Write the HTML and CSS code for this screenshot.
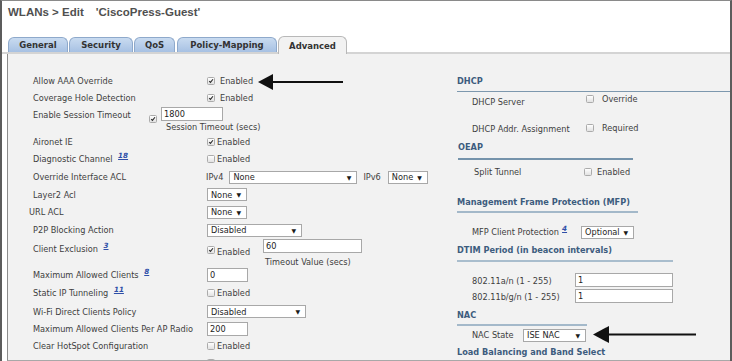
FILE: index.html
```html
<!DOCTYPE html>
<html>
    <head>
        <link rel="stylesheet" href="styles.css">
    </head>
    <body>

        <div class="frame">

            <div class="head">
                <h1 class="title"><span>WLANs &gt; Edit</span><span class="name">'CiscoPress-Guest'</span></h1>
                <ul class="tabs">
                    <li class="tab general">General</li>
                    <li class="tab security">Security</li>
                    <li class="tab qos">QoS</li>
                    <li class="tab policy">Policy-Mapping</li>
                    <li class="tab advanced active">Advanced</li>
                </ul>
            </div>

            <div class="panel">

                <div class="col left">
                    <div class="row r19">
                        <label class="lbl">Allow AAA Override</label>
                        <span class="cb on"><svg viewBox="0 0 8 8"><path d="M1.6 4.1 L3.3 5.9 L6.6 1.7"/></svg></span>
                        <span class="opt">Enabled</span>
                    </div>
                    <div class="row r16">
                        <label class="lbl">Coverage Hole Detection</label>
                        <span class="cb on"><svg viewBox="0 0 8 8"><path d="M1.6 4.1 L3.3 5.9 L6.6 1.7"/></svg></span>
                        <span class="opt">Enabled</span>
                    </div>
                    <div class="row tall session">
                        <label class="lbl short">Enable Session Timeout</label>
                        <span class="cb on"><svg viewBox="0 0 8 8"><path d="M1.6 4.1 L3.3 5.9 L6.6 1.7"/></svg></span>
                        <div class="stack">
                            <input class="txt timeout" value="1800">
                            <span class="hint">Session Timeout (secs)</span>
                        </div>
                    </div>
                    <div class="row r16">
                        <label class="lbl">Aironet IE</label>
                        <span class="cb on"><svg viewBox="0 0 8 8"><path d="M1.6 4.1 L3.3 5.9 L6.6 1.7"/></svg></span>
                        <span class="opt near">Enabled</span>
                    </div>
                    <div class="row">
                        <label class="lbl">Diagnostic Channel <a class="ref">18</a></label>
                        <span class="cb"></span>
                        <span class="opt near">Enabled</span>
                    </div>
                    <div class="row">
                        <label class="lbl">Override Interface ACL</label>
                        <span class="ip">IPv4</span>
                        <span class="sel acl"><span>None</span><i>&#9660;</i></span>
                        <span class="ip v6">IPv6</span>
                        <span class="sel small"><span>None</span><i>&#9660;</i></span>
                    </div>
                    <div class="row r17">
                        <label class="lbl">Layer2 Acl</label>
                        <span class="sel small"><span>None</span><i>&#9660;</i></span>
                    </div>
                    <div class="row">
                        <label class="lbl url">URL ACL</label>
                        <span class="sel small"><span>None</span><i>&#9660;</i></span>
                    </div>
                    <div class="row">
                        <label class="lbl">P2P Blocking Action</label>
                        <span class="sel p2p"><span>Disabled</span><i>&#9660;</i></span>
                    </div>
                    <div class="row tall exclusion">
                        <label class="lbl">Client Exclusion <a class="ref">3</a></label>
                        <span class="cb on"><svg viewBox="0 0 8 8"><path d="M1.6 4.1 L3.3 5.9 L6.6 1.7"/></svg></span>
                        <span class="opt near">Enabled</span>
                        <div class="stack">
                            <input class="txt wide" value="60">
                            <span class="hint">Timeout Value (secs)</span>
                        </div>
                    </div>
                    <div class="row r16">
                        <label class="lbl">Maximum Allowed Clients <a class="ref">8</a></label>
                        <input class="txt num" value="0">
                    </div>
                    <div class="row r19">
                        <label class="lbl">Static IP Tunneling <a class="ref">11</a></label>
                        <span class="cb"></span>
                        <span class="opt near">Enabled</span>
                    </div>
                    <div class="row r19">
                        <label class="lbl">Wi-Fi Direct Clients Policy</label>
                        <span class="sel wifi"><span>Disabled</span><i>&#9660;</i></span>
                    </div>
                    <div class="row r16">
                        <label class="lbl">Maximum Allowed Clients Per AP Radio</label>
                        <input class="txt num" value="200">
                    </div>
                    <div class="row">
                        <label class="lbl">Clear HotSpot Configuration</label>
                        <span class="cb"></span>
                        <span class="opt near">Enabled</span>
                    </div>
                    <div class="row last">
                        <label class="lbl"></label>
                        <span class="cb"></span>
                    </div>
                </div>

                <div class="col right">
                    <h3 class="sec dhcp">DHCP</h3>
                    <div class="rrow server">
                        <label class="rlbl">DHCP Server</label>
                        <span class="pick"><span class="cb"></span><span class="opt far">Override</span></span>
                    </div>
                    <div class="rrow assign">
                        <label class="rlbl">DHCP Addr. Assignment</label>
                        <span class="pick"><span class="cb"></span><span class="opt far">Required</span></span>
                    </div>
                    <h3 class="sec oeap">OEAP</h3>
                    <div class="rrow split">
                        <label class="rlbl">Split Tunnel</label>
                        <span class="cb"></span>
                        <span class="opt">Enabled</span>
                    </div>
                    <h3 class="sec mfp">Management Frame Protection (MFP)</h3>
                    <div class="rrow protect">
                        <label class="rlbl">MFP Client Protection<a class="ref">4</a></label>
                        <span class="sel optional"><span>Optional</span><i>&#9660;</i></span>
                    </div>
                    <h3 class="sec dtim">DTIM Period (in beacon intervals)</h3>
                    <div class="rrow band first">
                        <label class="rlbl">802.11a/n (1 - 255)</label>
                        <input class="txt dtimval" value="1">
                    </div>
                    <div class="rrow band">
                        <label class="rlbl">802.11b/g/n (1 - 255)</label>
                        <input class="txt dtimval" value="1">
                    </div>
                    <h3 class="sec nac">NAC</h3>
                    <div class="rrow nacstate">
                        <label class="rlbl">NAC State</label>
                        <span class="sel isenac"><span>ISE NAC</span><i>&#9660;</i></span>
                    </div>
                    <h3 class="sec lb">Load Balancing and Band Select</h3>
                </div>

            </div>

            <svg class="arrow aaa" viewBox="0 0 86 18"><polygon points="0,9 15,1 15,17"/><line x1="14" y1="9" x2="85" y2="9"/></svg>
            <svg class="arrow nacarrow" viewBox="0 0 104 19"><polygon points="0,9.5 16,1 16,18"/><line x1="15" y1="9.5" x2="103" y2="9.5"/></svg>

        </div>

    </body>
</html>
```

FILE: styles.css
```css
* { box-sizing: border-box; }
body { margin: 0; }

.frame { position: relative; width: 732px; height: 361px; display: flex; flex-direction: column; overflow: hidden; background: #ffffff; border-top: 1px solid #8a8a8a; border-left: 2px solid #5c5c5c; border-right: 2px solid #5c5c5c; font-family: "DejaVu Sans", Verdana, sans-serif; font-size: 8.2px; color: #3e3e3e; }

.head { height: 53px; padding-left: 6px; display: flex; flex-direction: column; border-bottom: 2px solid #d4d4d4; }
.title { margin: 4px 0 0 0; font-family: "Liberation Sans", Arial, sans-serif; font-size: 11.5px; line-height: 14px; font-weight: bold; color: #505050; }
.title .name { margin-left: 12px; }

.tabs { list-style: none; margin: auto 0 0 0; padding: 0; display: flex; align-items: flex-end; gap: 1px; }
.tab { height: 15px; padding: 0; flex: none; display: flex; align-items: center; justify-content: center; font-weight: bold; font-size: 8.5px; color: #333333; background: linear-gradient(#c9dbf0, #a7c1e3); border: 1px solid #8ea9cb; border-bottom: none; border-radius: 6px 6px 0 0; }
.tab.general { width: 60px; }
.tab.security { width: 64px; }
.tab.qos { width: 41px; }
.tab.policy { width: 100px; margin-left: 1px; }
.tab.advanced { width: 69px; }
.tab.active { height: 18px; margin-bottom: -2px; background: #f2f2f2; border-color: #b8b8b8; position: relative; }

.panel { flex: 1; margin-left: 5px; display: flex; background: #f2f2f2; border-left: 1px solid #8c8c8c; border-bottom: 1px solid #a8a8a8; overflow: hidden; }

.col.left { width: 432px; flex: none; padding: 17px 0 0 25px; }
.row { height: 18px; display: flex; align-items: center; }
.row.r16 { height: 16px; }
.row.r17 { height: 17px; }
.row.r19 { height: 19px; }
.row.tall { height: 28px; align-items: flex-start; }

.lbl { width: 174px; flex: none; line-height: 10px; white-space: nowrap; }
.lbl.short { width: 116px; }
.lbl.url { margin-left: -4px; width: 178px; }

.session .lbl { margin-top: 4px; }
.session .cb { margin-top: 9px; }
.session .stack { margin: 1px 0 0 4px; }
.exclusion .lbl { margin-top: 5px; }
.exclusion .cb { margin-top: 7px; }
.exclusion .opt { margin-top: 8px; }
.exclusion .stack { margin-left: 13px; }
.exclusion .hint { margin-top: 4px; padding-left: 2px; }
.row.last .cb { margin-top: 4px; }
.row.last { align-items: flex-start; }

.stack { display: flex; flex-direction: column; align-items: flex-start; }
.hint { line-height: 10px; margin-top: 1px; padding-left: 5px; white-space: nowrap; }

.cb { width: 8px; height: 8px; flex: none; display: inline-block; border: 1px solid #ababab; border-radius: 1.5px; background: linear-gradient(#fefefe, #e2e2e2); }
.cb svg { display: block; width: 6px; height: 6px; }
.cb svg path { fill: none; stroke: #2e2e2e; stroke-width: 1.5; }

.opt { margin-left: 5px; line-height: 10px; white-space: nowrap; }
.opt.near { margin-left: 2px; }
.opt.far { margin-left: 8px; }

.ref { margin-left: 3px; font-size: 7.2px; font-weight: bold; font-style: italic; color: #2f4fa8; text-decoration: underline; vertical-align: 4px; line-height: 0; }

.ip { margin-left: -1px; }
.ip.v6 { margin-left: 6px; }

.sel { height: 13px; flex: none; display: inline-flex; align-items: center; justify-content: space-between; padding: 0 5px 0 3px; background: #ffffff; border: 1px solid #a8a8a8; color: #262626; }
.sel i { font-style: normal; font-size: 6px; color: #1a1a1a; }
.sel.acl { width: 128px; margin-left: 6px; }
.sel.small { width: 40px; }
.ip.v6 + .sel.small { margin-left: 7px; }
.sel.p2p { width: 95px; }
.sel.wifi { width: 99px; }
.sel.optional { width: 53px; }
.sel.isenac { width: 63px; }

.txt { height: 14px; padding: 0 2px; margin: 0; font-family: "DejaVu Sans", Verdana, sans-serif; font-size: 8.2px; color: #222222; background: #ffffff; border: 1px solid #a8a8a8; outline: none; }
.txt.timeout { width: 62px; }
.txt.wide { width: 99px; }
.txt.num { width: 41px; }
.txt.dtimval { width: 98px; }

.col.right { flex: 1; padding-left: 17px; }
.sec { margin: 0; font-size: 8.2px; line-height: 10px; font-weight: bold; color: #3d5c7e; white-space: nowrap; }
.sec.dhcp { margin-top: 22px; padding-bottom: 5px; border-bottom: 1px solid #7d98ae; }
.sec.oeap { width: 175px; margin: 4px 0 0 1px; padding-bottom: 6px; border-bottom: 2px solid #7593ab; }
.sec.mfp { width: 181px; margin-top: 16px; padding-bottom: 4px; border-bottom: 2px solid #a3b8c9; }
.sec.dtim { width: 216px; margin-top: 3px; padding-bottom: 5px; border-bottom: 2px solid #a9bdcd; }
.sec.nac { width: 130px; margin-top: 6px; padding-bottom: 4px; border-bottom: 2px solid #a4b9ca; }
.sec.lb { margin-top: 4px; }

.rrow { height: 18px; display: flex; align-items: center; padding-left: 15px; }
.rlbl { flex: none; line-height: 10px; white-space: nowrap; }
.rrow.server .rlbl, .rrow.assign .rlbl { width: 114px; }
.rrow .pick { display: flex; align-items: center; margin-bottom: 4px; }
.rrow.server .rlbl { margin-top: 2px; }
.rrow.assign { height: 19px; margin-top: 9px; }
.rrow.assign .pick { margin-bottom: 2px; }
.rrow.split { margin-top: 3px; }
.rrow.split .rlbl { width: 110px; margin-left: 2px; }
.rrow.protect { height: 20px; margin-top: 9px; }
.rrow.protect .rlbl { width: 109px; }
.rrow.band { height: 16px; }
.rrow.band.first { margin-top: 10px; }
.rrow.band .rlbl { width: 103px; padding-top: 1px; }
.rrow.nacstate { height: 16px; margin-top: 1px; }
.rrow.nacstate .rlbl { width: 51px; }

.arrow { position: absolute; overflow: visible; }
.arrow polygon { fill: #111111; }
.arrow line { stroke: #111111; stroke-width: 2; }
.arrow.aaa { left: 256px; top: 72px; width: 86px; height: 18px; }
.arrow.nacarrow { left: 591px; top: 324px; width: 104px; height: 19px; }
```
